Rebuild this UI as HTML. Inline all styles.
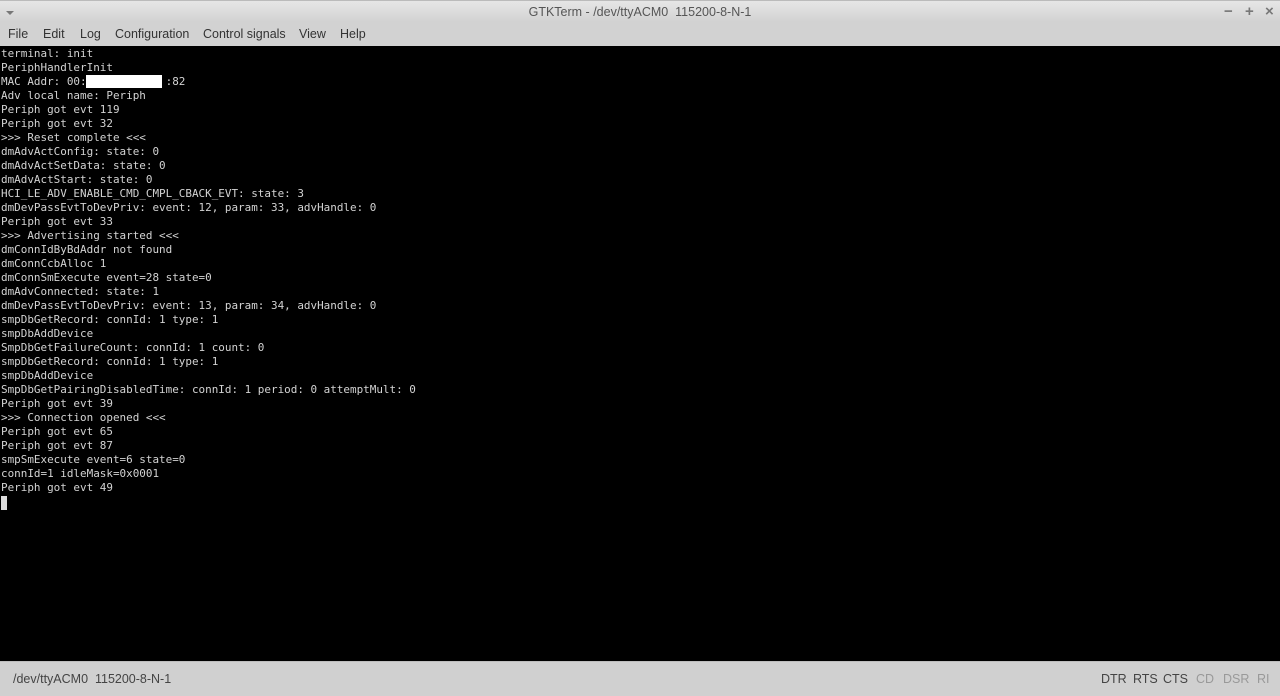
<!DOCTYPE html>
<html><head><meta charset="utf-8"><style>
body{margin:0;width:1280px;height:696px;overflow:hidden;background:#000;font-family:"Liberation Sans","DejaVu Sans",sans-serif;position:relative}
#title{position:absolute;left:0;top:0;width:1280px;height:22px;background:linear-gradient(#e6e6e6,#d2d2d2);border-top:1px solid #bbb;box-sizing:border-box}
#title .t{position:absolute;left:0;width:1280px;text-align:center;top:4px;font-size:12.5px;color:#555}
#title .arrow{position:absolute;left:6px;top:10px;width:0;height:0;border-left:4px solid transparent;border-right:4px solid transparent;border-top:4px solid #777}
#title .b{position:absolute;top:2px;font-size:15px;font-weight:bold;color:#777}
#menu{position:absolute;left:0;top:22px;width:1280px;height:24px;background:#d2d2d2}
#menu span{position:absolute;top:5px;font-size:12.5px;color:#333}
#term{position:absolute;left:1px;top:47px;color:#d3d3d3;font-family:"DejaVu Sans Mono","Liberation Mono",monospace;font-size:10.95px;line-height:14px;white-space:pre}
#mask{position:absolute;left:86px;top:75px;width:76px;height:13px;background:#fff}
#cur{position:absolute;left:1px;top:496px;width:6px;height:14px;background:#ddd}
#status{position:absolute;left:0;top:661px;width:1280px;height:35px;background:#d0d0d0;border-top:1px solid #bdbdbd;box-sizing:border-box}
#status span{position:absolute;top:10px;font-size:12.5px;color:#444}
#status .off{color:#999}
</style></head><body>
<div id="title"><div class="arrow"></div><div class="t">GTKTerm - /dev/ttyACM0&nbsp; 115200-8-N-1</div>
<span class="b" style="left:1224px">−</span><span class="b" style="left:1245px">+</span><span class="b" style="left:1265px">×</span></div>
<div id="menu"><span style="left:8px">File</span><span style="left:43px">Edit</span><span style="left:80px">Log</span><span style="left:115px">Configuration</span><span style="left:203px">Control signals</span><span style="left:299px">View</span><span style="left:340px">Help</span></div>
<div id="term">terminal: init
PeriphHandlerInit
MAC Addr: 00:            :82
Adv local name: Periph
Periph got evt 119
Periph got evt 32
&gt;&gt;&gt; Reset complete &lt;&lt;&lt;
dmAdvActConfig: state: 0
dmAdvActSetData: state: 0
dmAdvActStart: state: 0
HCI_LE_ADV_ENABLE_CMD_CMPL_CBACK_EVT: state: 3
dmDevPassEvtToDevPriv: event: 12, param: 33, advHandle: 0
Periph got evt 33
&gt;&gt;&gt; Advertising started &lt;&lt;&lt;
dmConnIdByBdAddr not found
dmConnCcbAlloc 1
dmConnSmExecute event=28 state=0
dmAdvConnected: state: 1
dmDevPassEvtToDevPriv: event: 13, param: 34, advHandle: 0
smpDbGetRecord: connId: 1 type: 1
smpDbAddDevice
SmpDbGetFailureCount: connId: 1 count: 0
smpDbGetRecord: connId: 1 type: 1
smpDbAddDevice
SmpDbGetPairingDisabledTime: connId: 1 period: 0 attemptMult: 0
Periph got evt 39
&gt;&gt;&gt; Connection opened &lt;&lt;&lt;
Periph got evt 65
Periph got evt 87
smpSmExecute event=6 state=0
connId=1 idleMask=0x0001
Periph got evt 49</div>
<div id="mask"></div>
<div id="cur"></div>
<div id="status"><span style="left:13px">/dev/ttyACM0&nbsp; 115200-8-N-1</span>
<span style="left:1101px">DTR</span><span style="left:1133px">RTS</span><span style="left:1163px">CTS</span><span class="off" style="left:1196px">CD</span><span class="off" style="left:1223px">DSR</span><span class="off" style="left:1257px">RI</span></div>
</body></html>
